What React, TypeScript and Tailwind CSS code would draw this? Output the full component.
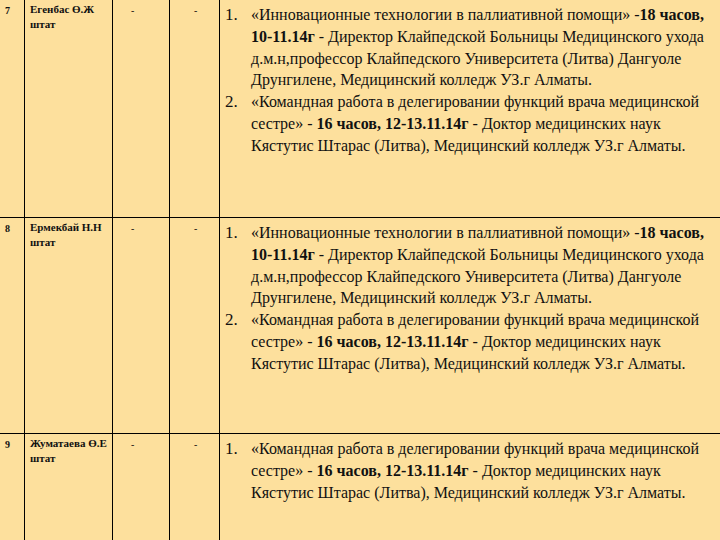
const courseA = [
  <>«Инновационные технологии в паллиативной помощи» -<b>18 часов,</b></>,
  <><b>10-11.14г</b> - Директор Клайпедской Больницы Медицинского ухода</>,
  <>д.м.н,профессор Клайпедского Университета (Литва) Дангуоле</>,
  <>Друнгилене, Медицинский колледж УЗ.г Алматы.</>,
];

const courseB = [
  <>«Командная работа в делегировании функций врача медицинской</>,
  <>сестре» - <b>16 часов, 12-13.11.14г</b> - Доктор медицинских наук</>,
  <>Кястутис Штарас (Литва), Медицинский колледж УЗ.г Алматы.</>,
];

const rows = [
  { no: "7", name: "Егенбас Ө.Ж", courses: [courseA, courseB], h: "h-[217px]" },
  { no: "8", name: "Ермекбай Н.Н", courses: [courseA, courseB], h: "h-[216px]" },
  { no: "9", name: "Жуматаева Ө.Е", courses: [courseB], h: "h-[120px]" },
];

export default function App() {
  return (
    <div className="w-[720px] h-[540px] overflow-hidden bg-[#fde09d] text-[#111] font-['Liberation_Serif','Times_New_Roman',serif]">
      {rows.map((row, i) => (
        <div
          key={row.no}
          className={`grid grid-cols-[25px_88px_57px_50px_1fr] ${row.h} ${i > 0 ? "border-t border-black" : ""}`}
        >
          <div className="border-r border-black pl-[5px] pt-[3px] text-[10px] font-bold">{row.no}</div>
          <div className="border-r border-black pl-[5px] pt-[2px] text-[11px] font-bold leading-[15px]">
            <div>{row.name}</div>
            <div>штат</div>
          </div>
          <div className="border-r border-black pl-[18px] pt-[3px] text-[10px]">-</div>
          <div className="border-r border-black pl-[24px] pt-[3px] text-[10px]">-</div>
          <div className="pt-[4px] text-[16px] leading-[21.8px]">
            {row.courses.map((lines, j) => (
              <div key={j} className="flex">
                <div className="w-[31px] pl-[5px] text-[17px]">{j + 1}.</div>
                <div className="whitespace-nowrap">
                  {lines.map((l, k) => (
                    <div key={k}>{l}</div>
                  ))}
                </div>
              </div>
            ))}
          </div>
        </div>
      ))}
    </div>
  );
}
